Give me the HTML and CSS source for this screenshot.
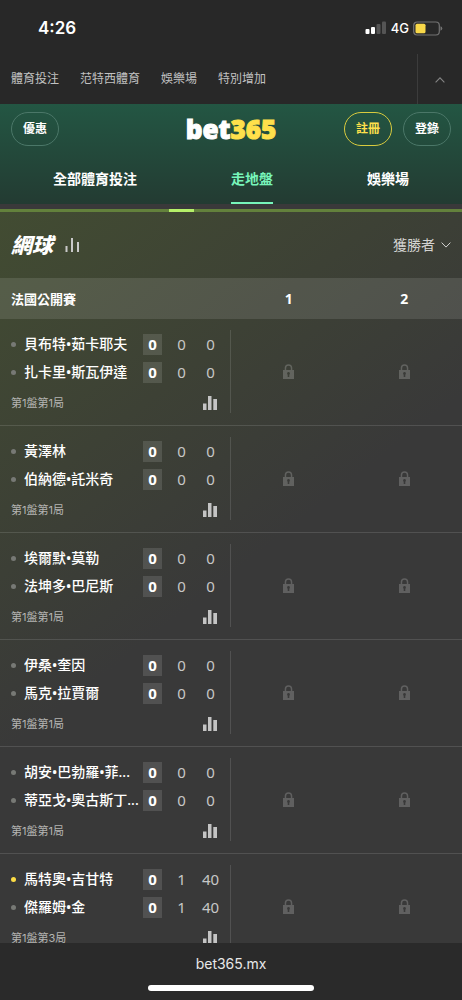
FILE: index.html
```html
<!DOCTYPE html>
<html lang="zh-Hant">
<head>
<meta charset="utf-8">
<meta name="viewport" content="width=device-width, initial-scale=1">
<title>bet365</title>
<link rel="stylesheet" href="styles.css">
</head>
<body>
<svg class="defs" aria-hidden="true">
  <symbol id="lock" viewBox="0 0 11 15"><path fill-rule="evenodd" d="M0 6h1.700V4a3.800 3.800 0 0 1 7.600 0v2H11v9H0zM3.200 6h4.600V4a2.300 2.300 0 0 0-4.600 0zM5.500 8a1.500 1.500 0 0 0-.8 2.700V13h1.600v-2.300A1.500 1.500 0 0 0 5.500 8z"/></symbol>
  <symbol id="stats" viewBox="0 0 14 14"><path d="M0 7.500h3.500V14H0zM5 0h3.500v14H5zM10.300 3H14v11h-3.700z"/></symbol>
</svg>
<div class="status">
  <span class="time">4:26</span>
  <div class="status-right">
    <svg width="22" height="14" viewBox="0 0 22 14" aria-hidden="true"><rect x="0.500" y="8" width="4" height="5" rx="1" fill="#fff"/><rect x="6" y="6" width="4" height="7" rx="1" fill="#fff"/><rect x="11.500" y="3" width="4" height="10" rx="1" fill="#555"/><rect x="17" y="0.500" width="4" height="12.500" rx="1" fill="#555"/></svg>
    <span class="network">4G</span>
    <svg width="30" height="15" viewBox="0 0 30 15" aria-hidden="true"><rect x="0.700" y="1" width="25.600" height="13" rx="3.500" fill="none" stroke="#737373" stroke-width="1.200"/><rect x="2.500" y="2.800" width="10" height="9.500" rx="1.500" fill="#f8d849"/><path d="M27.500 5.300q1.800.6 1.800 2.200t-1.800 2.200z" fill="#737373"/></svg>
  </div>
</div>
<nav class="products">
  <a href="#">體育投注</a><a href="#">范特西體育</a><a href="#">娛樂場</a><a href="#">特別增加</a>
  <button class="collapse" aria-label="收起"><svg width="10" height="6" viewBox="0 0 10 6" aria-hidden="true"><path d="M.6 5.400 5 .9l4.400 4.500" fill="none" stroke="currentColor" stroke-width="1.100"/></svg></button>
</nav>
<header class="header">
  <div class="header-top">
    <button class="pill">優惠</button>
    <a class="logo" href="#">bet<span>365</span></a>
    <div class="account"><button class="pill join">註冊</button><button class="pill">登錄</button></div>
  </div>
  <nav class="tabs"><a href="#">全部體育投注</a><a class="active" href="#">走地盤</a><a href="#">娛樂場</a></nav>
</header>
<main class="main">
  <div class="strip"><div class="strip-mark"></div></div>
  <div class="sport">
    <h1>網球</h1>
    <svg class="sport-stats" width="15" height="14" viewBox="0 0 15 14" aria-hidden="true"><path d="M.5 8h2v6h-2zM6 0h2v14H6zM12 4h2v10h-2z"/></svg>
    <button class="market">獲勝者<svg width="10" height="6" viewBox="0 0 10 6" aria-hidden="true"><path d="M.6.6 5 5.100 9.400.6" fill="none" stroke="currentColor"/></svg></button>
  </div>
  <div class="league"><h2>法國公開賽</h2><span>1</span><span>2</span></div>
  <ul class="matches">
    <li class="match">
      <div class="info">
        <div class="player"><span class="name">貝布特•茹卡耶夫</span><b>0</b><span>0</span><span>0</span></div>
        <div class="player"><span class="name">扎卡里•斯瓦伊達</span><b>0</b><span>0</span><span>0</span></div>
        <div class="state"><span>第1盤第1局</span><svg><use href="#stats"/></svg></div>
      </div>
      <div class="odd"><svg><use href="#lock"/></svg></div><div class="odd"><svg><use href="#lock"/></svg></div>
    </li>
    <li class="match">
      <div class="info">
        <div class="player"><span class="name">黃澤林</span><b>0</b><span>0</span><span>0</span></div>
        <div class="player"><span class="name">伯納德•託米奇</span><b>0</b><span>0</span><span>0</span></div>
        <div class="state"><span>第1盤第1局</span><svg><use href="#stats"/></svg></div>
      </div>
      <div class="odd"><svg><use href="#lock"/></svg></div><div class="odd"><svg><use href="#lock"/></svg></div>
    </li>
    <li class="match">
      <div class="info">
        <div class="player"><span class="name">埃爾默•莫勒</span><b>0</b><span>0</span><span>0</span></div>
        <div class="player"><span class="name">法坤多•巴尼斯</span><b>0</b><span>0</span><span>0</span></div>
        <div class="state"><span>第1盤第1局</span><svg><use href="#stats"/></svg></div>
      </div>
      <div class="odd"><svg><use href="#lock"/></svg></div><div class="odd"><svg><use href="#lock"/></svg></div>
    </li>
    <li class="match">
      <div class="info">
        <div class="player"><span class="name">伊桑•奎因</span><b>0</b><span>0</span><span>0</span></div>
        <div class="player"><span class="name">馬克•拉賈爾</span><b>0</b><span>0</span><span>0</span></div>
        <div class="state"><span>第1盤第1局</span><svg><use href="#stats"/></svg></div>
      </div>
      <div class="odd"><svg><use href="#lock"/></svg></div><div class="odd"><svg><use href="#lock"/></svg></div>
    </li>
    <li class="match">
      <div class="info">
        <div class="player"><span class="name">胡安•巴勃羅•菲...</span><b>0</b><span>0</span><span>0</span></div>
        <div class="player"><span class="name">蒂亞戈•奧古斯丁...</span><b>0</b><span>0</span><span>0</span></div>
        <div class="state"><span>第1盤第1局</span><svg><use href="#stats"/></svg></div>
      </div>
      <div class="odd"><svg><use href="#lock"/></svg></div><div class="odd"><svg><use href="#lock"/></svg></div>
    </li>
    <li class="match">
      <div class="info">
        <div class="player serving"><span class="name">馬特奧•吉甘特</span><b>0</b><span>1</span><span>40</span></div>
        <div class="player"><span class="name">傑羅姆•金</span><b>0</b><span>1</span><span>40</span></div>
        <div class="state"><span>第1盤第3局</span><svg><use href="#stats"/></svg></div>
      </div>
      <div class="odd"><svg><use href="#lock"/></svg></div><div class="odd"><svg><use href="#lock"/></svg></div>
    </li>
  </ul>
</main>
<footer class="browser"><span>bet365.mx</span><div class="home"></div></footer>
</body>
</html>
```
FILE: styles.css
```css
* { box-sizing: border-box; }
body {
  margin: 0;
  height: 100vh;
  display: flex;
  flex-direction: column;
  overflow: hidden;
  background: #282828;
  color: #fff;
  font-family: "Noto Sans", "Noto Sans CJK TC", sans-serif;
  font-size: 14px;
  line-height: 20px;
}
a { color: inherit; text-decoration: none; }
button { font: inherit; color: inherit; background: none; border: 0; padding: 0; }
h1, h2, ul { margin: 0; padding: 0; list-style: none; }
.defs { display: none; }

.status {
  flex: none;
  display: flex;
  justify-content: space-between;
  align-items: center;
  height: 54px;
  padding: 2px 19px 0 38px;
  font-family: Inter, sans-serif;
}
.time { font-size: 17px; font-weight: 600; }
.status-right { display: flex; align-items: center; gap: 4px; }
.network { font-size: 13px; font-weight: 500; }

.products {
  flex: none;
  display: flex;
  align-items: center;
  gap: 21px;
  height: 50px;
  padding-left: 11px;
  font-size: 12px;
  color: #c2c2c2;
}
.collapse {
  align-self: stretch;
  width: 45px;
  margin-left: auto;
  border-left: 1px solid #3c3c3c;
  color: #858585;
}
.collapse svg { vertical-align: middle; }

.header { flex: none; background: linear-gradient(#235643, #233b32); }
.header-top {
  display: grid;
  grid-template-columns: 1fr auto 1fr;
  align-items: center;
  height: 50px;
  padding: 0 11px;
}
.pill {
  justify-self: start;
  width: 48px;
  height: 34px;
  border: 1px solid #4b7768;
  border-radius: 17px;
  font-size: 12px;
  font-weight: 700;
}
.join { border-color: #d9cb3e; color: #ffe04b; }
.account { justify-self: end; display: flex; gap: 11px; }
.logo {
  font-family: "Open Sans", "Noto Sans", sans-serif;
  font-size: 26px;
  line-height: 32px;
  font-weight: 800;
  -webkit-text-stroke: 1px currentColor;
}
.logo span { color: #ffe04b; }
.tabs {
  display: flex;
  justify-content: space-between;
  height: 50px;
  padding: 0 53px;
  line-height: 50px;
  font-weight: 700;
}
.active { color: #77f5ba; border-bottom: 2px solid #77f5ba; }

.main {
  flex: 1;
  min-height: 0;
  overflow: hidden;
  border-top: 5px solid #3a393a;
  background: linear-gradient(142deg, #424c32, #3d4135 28%, #393939 50%);
}
.strip { height: 3px; background: #63813c; }
.strip-mark { width: 25px; height: 3px; margin-left: 169px; background: #b5f069; }
.sport { display: flex; align-items: center; height: 66px; padding: 0 11px; }
.sport h1 { font-size: 21px; line-height: 30px; font-weight: 900; font-style: italic; }
.sport-stats { margin-left: 12px; fill: #c9c9c9; }
.market {
  display: flex;
  align-items: center;
  gap: 6px;
  margin-left: auto;
  color: #d3d3d1;
}
.league {
  display: grid;
  grid-template-columns: 2fr 1fr 1fr;
  align-items: center;
  height: 41px;
  background: rgba(255, 255, 255, 0.11);
  text-align: center;
  font-weight: 700;
}
.league h2 { padding-left: 11px; font-size: 13px; text-align: left; }
.match {
  display: grid;
  grid-template-columns: 2fr 1fr 1fr;
  height: 107px;
  padding: 11px 0 12px;
  border-bottom: 1px solid rgba(255, 255, 255, 0.12);
}
.info {
  min-width: 0;
  padding: 0 10px 0 11px;
  border-right: 1px solid rgba(255, 255, 255, 0.12);
}
.player { display: flex; align-items: center; gap: 10px; height: 28px; color: #c7c7c7; }
.player::before {
  content: "";
  flex: none;
  width: 5px;
  height: 5px;
  margin-right: -2px;
  border-radius: 50%;
  background: #777975;
}
.serving::before { background: #fcdc45; }
.name {
  flex: 1;
  min-width: 0;
  margin-right: -10px;
  overflow: hidden;
  white-space: nowrap;
  color: #fff;
  font-weight: 500;
}
.player b, .player b ~ span { flex: none; width: 19px; text-align: center; font-size: 15px; }
.player b { line-height: 21px; background: rgba(255, 255, 255, 0.12); color: #fff; }
.state {
  display: flex;
  justify-content: space-between;
  align-items: center;
  height: 27px;
  padding-top: 7px;
  font-family: Inter, "Noto Sans CJK TC", sans-serif;
  font-size: 11px;
  color: #b5b5b3;
}
.state svg { width: 14px; height: 14px; margin-right: 3px; fill: #c4c4c4; }
.odd { display: grid; place-items: center; }
.odd svg { width: 11px; height: 15px; fill: rgba(255, 255, 255, 0.2); }

.browser {
  flex: none;
  display: flex;
  flex-direction: column;
  align-items: center;
  gap: 11px;
  height: 57px;
  padding-top: 11px;
  background: #2a2a2a;
  font-family: Inter, sans-serif;
  color: #e8e8e8;
}
.home { width: 36%; height: 6px; border-radius: 3px; background: #fff; }
```
